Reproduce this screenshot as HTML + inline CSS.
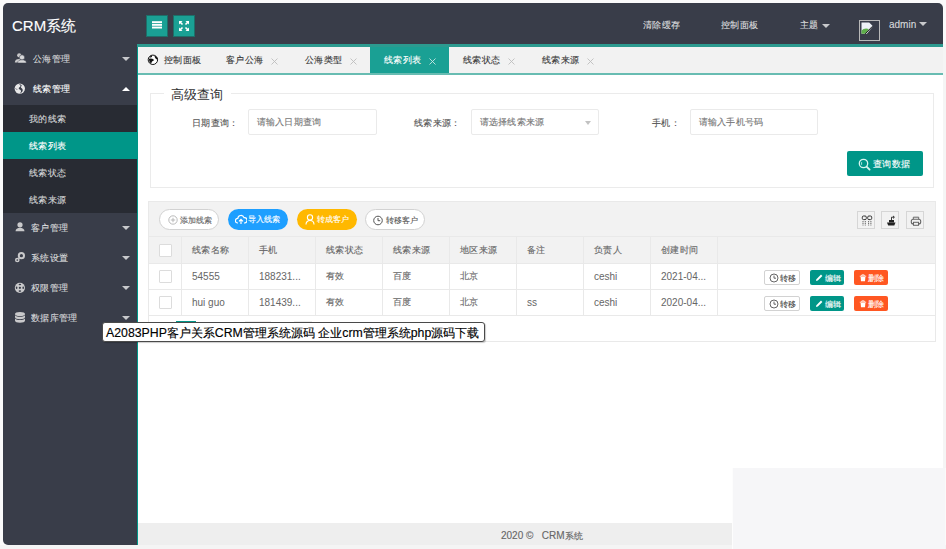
<!DOCTYPE html>
<html><head><meta charset="utf-8">
<style>
*{box-sizing:border-box;margin:0;padding:0}
html,body{width:946px;height:549px;overflow:hidden;background:#fafafa;font-family:"Liberation Sans",sans-serif;position:relative}
div,span,svg{position:absolute}
.t{white-space:nowrap;line-height:1;-webkit-text-stroke:.12px currentColor}
.r{background:#e9e9e9}
#hdr{left:3px;top:3px;width:940px;height:41px;background:#393D49;border-radius:5px 5px 0 0}
#side{left:3px;top:44px;width:134px;height:501px;background:#393D49;border-radius:0 0 0 5px}
#logo{left:12px;top:18px;font-size:15px;color:#fff}
.hbtn{top:16px;width:20px;height:20px;background:#1aa094;box-shadow:0 0 0 1px #1d6f69}
.htx{top:21px;font-size:9.3px;letter-spacing:.3px;color:rgba(255,255,255,.78)}
.caret{width:0;height:0;border-left:4px solid transparent;border-right:4px solid transparent;border-top:4.5px solid rgba(255,255,255,.72)}
.mi{left:3px;width:134px;height:30px}
.mi .t{left:30px;top:10.5px;font-size:9.3px;letter-spacing:.3px;color:rgba(255,255,255,.75)}
.mi .ar{left:119px;top:13px}
.mi svg{left:10px;top:8px;opacity:.88}
.sub{left:3px;width:134px;height:27px}
.sub .t{left:26px;top:9.5px;font-size:9.3px;letter-spacing:.3px;color:rgba(255,255,255,.75)}
#content{left:137px;top:44px;width:806px;height:501px;background:#fff;border-left:1px solid #009688}
#tabtop{left:137px;top:44px;width:806px;height:3px;background:#2c9a8f}
#tabbar{left:138px;top:47px;width:805px;height:26px;background:#f2f2f2}
#tabline{left:138px;top:73px;width:805px;height:2px;background:#68bcb2}
.tab{top:0;height:26px;width:79px}
.tab .t{top:9px;left:14px;font-size:9.3px;letter-spacing:.3px;color:#3a3a3a}
.tab svg{left:58px;top:9.5px}
#footer{left:138px;top:523px;width:805px;height:22px;background:#eee}
#footer .t{left:363px;top:7.5px;font-size:10px;color:#666}
#overlay{left:732px;top:468px;width:213px;height:81px;background:#f6f6f8;border-left:1px solid #fdfdfd}
#bstrip{left:0;top:545px;width:946px;height:4px;background:#f4f4f4}
#rstrip{left:943px;top:44px;width:3px;height:424px;background:#f5f5f5}
#fs{left:150px;top:93px;width:784px;height:95px;border:1px solid #ebebeb}
#legend{left:164px;top:86px;width:67px;height:16px;background:#fff}
#legend .t{left:7px;top:1.5px;font-size:13.3px;color:#333;-webkit-text-stroke:0}
.lbl{font-size:9.3px;letter-spacing:.3px;color:#555;top:118.5px}
.inp{top:109px;height:26px;width:129px;border:1px solid #eaeaea;background:#fff;border-radius:2px}
.inp .t{left:7.5px;top:8px;font-size:9.3px;letter-spacing:.3px;color:#777}
#qbtn{left:847px;top:151px;width:76px;height:25px;background:#009688;border-radius:2px}
#qbtn .t{left:26px;top:8.5px;font-size:9.3px;letter-spacing:.3px;color:#fff}
#qbtn svg{left:11px;top:7px}
.pill{top:209px;height:21px;width:60px;border-radius:10.5px}
.pill .t{top:6px;left:20px;font-size:8.3px}
.pill svg{left:7px;top:5px}
.ticon{top:211px;width:18px;height:18px;border:1px solid #d6d6d6;background:#f2f2f2}
.ticon svg{left:3px;top:3px}
.cell{font-size:9.3px;letter-spacing:.3px;color:#666}
.lat{font-size:10px;letter-spacing:0;-webkit-text-stroke:0}
.cb{left:159px;width:13px;height:13px;border:1px solid #dcdcdc;background:#fff;border-radius:1px}
.abtn{height:15px;border-radius:2px}
.abtn .t{top:3.5px;font-size:8.4px}
.abtn svg{top:3px}
#tip{left:102px;top:322px;width:383px;height:20px;background:#fff;border:1px solid #4a4a4a;border-radius:3px;box-shadow:1px 1px 1px rgba(0,0,0,.2)}
#tip .t{left:3px;top:3.5px;font-size:12.3px;color:#000;-webkit-text-stroke:.15px #000}
</style></head><body>
<div id="bstrip"></div>
<div id="hdr"></div>
<div id="side"></div>
<div id="content"></div>
<div id="tabtop"></div>
<div id="rstrip"></div>

<!-- header -->
<span id="logo" class="t">CRM系统</span>
<div class="hbtn" style="left:147px"><svg width="20" height="20" style="left:0;top:0"><rect x="5" y="5.2" width="10" height="1.9" fill="#fff"/><rect x="5" y="7.9" width="10" height="1.9" fill="#fff"/><rect x="5" y="10.6" width="10" height="1.9" fill="#fff"/></svg></div>
<div class="hbtn" style="left:174px"><svg width="20" height="20" style="left:0;top:0" fill="#fff" stroke="#fff"><path d="M5 5h3.5l-3.5 3.5zM15 5v3.5l-3.5-3.5zM5 15v-3.5l3.5 3.5zM15 15h-3.5l3.5-3.5z" stroke="none"/><path d="M6 6l2.5 2.5M14 6l-2.5 2.5M6 14l2.5-2.5M14 14l-2.5-2.5" stroke-width="1.6"/></svg></div>
<span class="t htx" style="left:643px">清除缓存</span>
<span class="t htx" style="left:721px">控制面板</span>
<span class="t htx" style="left:800px">主题</span>
<div class="caret" style="left:822px;top:24px"></div>
<div style="left:859px;top:20px;width:21px;height:21px;border:1px solid #b9b9b9;background:#393D49"><svg width="12" height="13" style="left:1px;top:1px"><path d="M.5 .5H8.2L11.3 3.6V5L5.8 11.7H.5Z" fill="#eef2f7"/><path d="M.5 11.7V8.6Q3 5.6 7.8 6.9L4.6 11.7Z" fill="#5fae4b"/><path d="M4.2 11.9L11.3 4.4" stroke="#1e1e1e" stroke-width="1"/></svg></div>
<span class="t htx" style="left:889px;top:20px;font-size:10px;letter-spacing:0">admin</span>
<div class="caret" style="left:919px;top:21.5px"></div>

<!-- sidebar -->
<div class="mi" style="top:44px"><svg width="16" height="14" style="top:8px"><circle cx="6.2" cy="3.3" r="2.1" fill="#ddd"/><path d="M1.8 10.6c0-2.6 1.8-3.6 4.4-3.6c1.4 0 2.4.4 3 1.2l-1.5 2.4z" fill="#ddd"/><circle cx="9" cy="5.4" r="2.6" fill="#eee" stroke="#393D49" stroke-width=".6"/><path d="M4.6 11c0-2.3 2-3.2 4.4-3.2s4.4.9 4.4 3.2z" fill="#eee" stroke="#393D49" stroke-width=".5"/></svg><span class="t">公海管理</span><div class="caret ar"></div></div>
<div class="mi" style="top:74px"><svg width="14" height="14" style="top:8px"><circle cx="6.8" cy="6.6" r="5.2" fill="#fff"/><path d="M5.8 2.2c1.2 1 2.2 1 1.6 2.3c-.6 1-2 .8-1.6 2.2c.3 1 1.8.6 2.2 2c.3 1-.6 2-1.3 2.8c1.6-.6 3.5-2 3-3.8c-.3-1.4-1.8-1.4-1.8-2.4c0-1 1.2-1.2.6-2.4c-.4-.6-1.5-.9-2.7-.7z" fill="#393D49"/><path d="M2.4 6.5c1 .2 1.6.8 1.6 1.4" stroke="#393D49" stroke-width=".6" fill="none"/></svg><span class="t" style="color:#fff">线索管理</span><div class="caret ar" style="border-top:0;border-bottom:4.5px solid #fff"></div></div>
<div style="left:3px;top:105px;width:134px;height:108px;background:#282b33"></div>
<div class="sub" style="top:105px"><span class="t">我的线索</span></div>
<div class="sub" style="top:132px;background:#009688"><span class="t" style="color:#fff">线索列表</span></div>
<div class="sub" style="top:159px"><span class="t">线索状态</span></div>
<div class="sub" style="top:186px"><span class="t">线索来源</span></div>
<div class="mi" style="top:213px"><svg width="14" height="14" style="top:8px"><circle cx="7" cy="3.8" r="2.6" fill="#ddd"/><path d="M2.5 10.3c0-2.4 2-3.6 4.5-3.6s4.5 1.2 4.5 3.6z" fill="#ddd"/></svg><span class="t" style="left:28px">客户管理</span><div class="caret ar"></div></div>
<div class="mi" style="top:243px"><svg width="14" height="14" style="top:8px"><circle cx="8.4" cy="4.7" r="2.6" fill="none" stroke="#ddd" stroke-width="2"/><circle cx="4.3" cy="9" r="1.6" fill="none" stroke="#ddd" stroke-width="1.5"/></svg><span class="t" style="left:28px">系统设置</span><div class="caret ar"></div></div>
<div class="mi" style="top:273px"><svg width="14" height="14" style="top:8px"><circle cx="6.9" cy="6.8" r="5.1" fill="#ddd"/><circle cx="6.9" cy="6.8" r="1.1" fill="#393D49"/><ellipse cx="6.9" cy="3.5" rx="1.3" ry=".8" fill="#393D49"/><ellipse cx="6.9" cy="10.1" rx="1.3" ry=".8" fill="#393D49"/><ellipse cx="3.6" cy="6.8" rx=".8" ry="1.3" fill="#393D49"/><ellipse cx="10.2" cy="6.8" rx=".8" ry="1.3" fill="#393D49"/></svg><span class="t" style="left:28px">权限管理</span><div class="caret ar"></div></div>
<div class="mi" style="top:303px"><svg width="14" height="14" style="top:8px"><ellipse cx="7" cy="3" rx="5" ry="2" fill="#ddd"/><path d="M2 4.2v2.1c0 1.1 2.2 2 5 2s5-.9 5-2V4.2c-1 1-2.8 1.5-5 1.5s-4-.5-5-1.5z" fill="#ddd"/><path d="M2 7.6v2.1c0 1.1 2.2 2 5 2s5-.9 5-2V7.6c-1 1-2.8 1.5-5 1.5s-4-.5-5-1.5z" fill="#ddd"/></svg><span class="t" style="left:28px">数据库管理</span><div class="caret ar"></div></div>

<!-- tabs -->
<div id="tabbar">
  <div class="tab" style="left:0;width:74px"><svg width="12" height="12" style="left:9px;top:7px"><circle cx="5.9" cy="5.8" r="4.7" fill="#fff" stroke="#111" stroke-width="1"/><path d="M2.4 3.4Q3.4 1.5 5.2 1.4L4.8 2.9Q3.7 3.6 2.4 3.4z" fill="#111"/><path d="M1.8 4.8Q4.8 4 7.2 6Q5.8 7.2 5 7.4L4.2 9.6Q1.8 8 1.8 4.8z" fill="#111"/><path d="M7.4 1.4Q10.6 2.6 10.8 5.8Q9.2 5.4 8.4 4.2Q7.6 3 7.4 1.4z" fill="#111"/></svg><span class="t" style="left:26px">控制面板</span></div>
  <div class="tab" style="left:74px"><span class="t">客户公海</span><svg width="9" height="9"><path d="M1.5 1.5l6 6M7.5 1.5l-6 6" stroke="#bdbdbd" stroke-width=".9"/></svg></div>
  <div class="tab" style="left:153px"><span class="t">公海类型</span><svg width="9" height="9"><path d="M1.5 1.5l6 6M7.5 1.5l-6 6" stroke="#bdbdbd" stroke-width=".9"/></svg></div>
  <div class="tab" style="left:232px;background:#1aa094"><span class="t" style="color:#fff">线索列表</span><svg width="9" height="9"><path d="M1.5 1.5l6 6M7.5 1.5l-6 6" stroke="#c8e8e4" stroke-width=".9"/></svg></div>
  <div class="tab" style="left:311px"><span class="t">线索状态</span><svg width="9" height="9"><path d="M1.5 1.5l6 6M7.5 1.5l-6 6" stroke="#bdbdbd" stroke-width=".9"/></svg></div>
  <div class="tab" style="left:390px"><span class="t">线索来源</span><svg width="9" height="9"><path d="M1.5 1.5l6 6M7.5 1.5l-6 6" stroke="#bdbdbd" stroke-width=".9"/></svg></div>
</div>
<div id="tabline"></div>

<!-- search -->
<div id="fs"></div>
<div id="legend"><span class="t">高级查询</span></div>
<span class="t lbl" style="left:192px">日期查询：</span>
<div class="inp" style="left:248px"><span class="t">请输入日期查询</span></div>
<span class="t lbl" style="left:414px">线索来源：</span>
<div class="inp" style="left:471px;width:128px"><span class="t">请选择线索来源</span><div style="left:113px;top:10.5px;width:0;height:0;border-left:3.5px solid transparent;border-right:3.5px solid transparent;border-top:4px solid #c2c2c2"></div></div>
<span class="t lbl" style="left:652px">手机：</span>
<div class="inp" style="left:690px;width:128px"><span class="t">请输入手机号码</span></div>
<div id="qbtn"><svg width="13" height="13"><circle cx="5.5" cy="5.5" r="4.2" fill="none" stroke="#d8f5f0" stroke-width="1.3"/><path d="M8.6 8.6l3 3" stroke="#d8f5f0" stroke-width="1.8" stroke-linecap="round"/><path d="M3.6 4.2v2.6" stroke="#d8f5f0" stroke-width=".8"/></svg><span class="t">查询数据</span></div>

<!-- table -->
<div style="left:148px;top:201px;width:788px;height:141px;background:#fff"></div>
<div style="left:148px;top:201px;width:788px;height:63px;background:#f2f2f2"></div>
<div class="r" style="left:148px;top:201px;width:788px;height:1px"></div>
<div class="r" style="left:148px;top:341px;width:788px;height:1px"></div>
<div class="r" style="left:148px;top:201px;width:1px;height:141px"></div>
<div class="r" style="left:935px;top:201px;width:1px;height:141px"></div>
<div class="r" style="left:148px;top:236px;width:788px;height:1px"></div>
<div class="r" style="left:148px;top:263px;width:788px;height:1px"></div>
<div class="r" style="left:148px;top:289px;width:788px;height:1px"></div>
<div class="r" style="left:148px;top:315px;width:788px;height:1px"></div>
<div class="r" style="left:181px;top:237px;width:1px;height:78px"></div>
<div class="r" style="left:248px;top:237px;width:1px;height:78px"></div>
<div class="r" style="left:315px;top:237px;width:1px;height:78px"></div>
<div class="r" style="left:382px;top:237px;width:1px;height:78px"></div>
<div class="r" style="left:449px;top:237px;width:1px;height:78px"></div>
<div class="r" style="left:516px;top:237px;width:1px;height:78px"></div>
<div class="r" style="left:583px;top:237px;width:1px;height:78px"></div>
<div class="r" style="left:650px;top:237px;width:1px;height:78px"></div>
<div class="r" style="left:717px;top:237px;width:1px;height:78px"></div>
<div style="left:176px;top:320.5px;width:20px;height:3px;background:#009688"></div><div style="left:245px;top:321px;width:26px;height:1px;background:#eee"></div><div style="left:294px;top:321px;width:18px;height:1px;background:#eee"></div>

<div class="pill" style="left:159px;border:1px solid #d2d2d2;background:#fff"><svg width="11" height="11" style="left:7.5px;top:4.5px"><circle cx="5" cy="5" r="4.2" fill="none" stroke="#aaa" stroke-width=".8"/><path d="M5 2.8v4.4M2.8 5h4.4" stroke="#aaa" stroke-width=".8"/></svg><span class="t" style="color:#666">添加线索</span></div>
<div class="pill" style="left:228px;background:#1e9fff"><svg width="12" height="11"><path d="M3 9H2.6A2.3 2.3 0 0 1 2.8 4.4A3.2 3.2 0 0 1 9 3.6A2.6 2.6 0 0 1 9.6 9H9" fill="none" stroke="#fff" stroke-width="1.2"/><path d="M6 10V5.5M4 7.3l2-2l2 2" fill="none" stroke="#fff" stroke-width="1.2"/></svg><span class="t" style="color:#fff">导入线索</span></div>
<div class="pill" style="left:297px;background:#ffb800"><svg width="11" height="11" style="left:8px"><circle cx="5" cy="3.4" r="2.6" fill="none" stroke="#fff" stroke-width="1.1"/><path d="M1 10.5c0-2.6 1.8-4 4-4s4 1.4 4 4" fill="none" stroke="#fff" stroke-width="1.1"/></svg><span class="t" style="color:#fff">转成客户</span></div>
<div class="pill" style="left:365px;border:1px solid #d2d2d2;background:#fff"><svg width="11" height="11" style="left:6.5px;top:4.5px"><circle cx="5" cy="5.5" r="4.3" fill="none" stroke="#555" stroke-width="1"/><path d="M5 3v2.7h2.2" fill="none" stroke="#555" stroke-width="1"/></svg><span class="t" style="color:#555">转移客户</span></div>
<div class="ticon" style="left:857px"><svg width="12" height="12"><rect x="1.3" y="1" width="4" height="3.6" rx="1.2" fill="none" stroke="#333" stroke-width="1"/><rect x="6.7" y="1" width="4" height="3.6" rx="1.2" fill="none" stroke="#333" stroke-width="1"/><path d="M2 6v4.5M4.3 6v4.5M7.6 6v4.5M9.9 6v4.5" stroke="#444" stroke-width=".8" stroke-dasharray="1.2 .6"/></svg></div>
<div class="ticon" style="left:881px"><svg width="12" height="12"><path d="M2 7.5h8.5l-1.2 3H3.2z" fill="#222"/><path d="M4 7.5v-2.5h5v2.5" fill="#222"/><path d="M6.5 5V2.2h2.6M8 .9l1.4 1.3L8 3.5" fill="none" stroke="#222" stroke-width=".9"/></svg></div>
<div class="ticon" style="left:906px"><svg width="12" height="12"><path d="M3.3 4.3V2.2h5.4v2.1" fill="none" stroke="#666" stroke-width="1"/><rect x="1.3" y="4.3" width="9.4" height="4.6" rx="2" fill="none" stroke="#666" stroke-width="1.1"/><rect x="3.5" y="7.3" width="5" height="3" fill="#f2f2f2" stroke="#666" stroke-width="1"/></svg></div>

<div class="cb" style="top:244px"></div>
<span class="t cell" style="left:192px;top:246px">线索名称</span>
<span class="t cell" style="left:259px;top:246px">手机</span>
<span class="t cell" style="left:326px;top:246px">线索状态</span>
<span class="t cell" style="left:393px;top:246px">线索来源</span>
<span class="t cell" style="left:460px;top:246px">地区来源</span>
<span class="t cell" style="left:527px;top:246px">备注</span>
<span class="t cell" style="left:594px;top:246px">负责人</span>
<span class="t cell" style="left:661px;top:246px">创建时间</span>

<div class="cb" style="top:270px"></div>
<span class="t cell lat" style="left:192px;top:272px">54555</span>
<span class="t cell lat" style="left:259px;top:272px">188231...</span>
<span class="t cell" style="left:326px;top:272px">有效</span>
<span class="t cell" style="left:393px;top:272px">百度</span>
<span class="t cell" style="left:460px;top:272px">北京</span>
<span class="t cell lat" style="left:594px;top:272px">ceshi</span>
<span class="t cell lat" style="left:661px;top:272px">2021-04...</span>

<div class="cb" style="top:296px"></div>
<span class="t cell lat" style="left:192px;top:298px">hui guo</span>
<span class="t cell lat" style="left:259px;top:298px">181439...</span>
<span class="t cell" style="left:326px;top:298px">有效</span>
<span class="t cell" style="left:393px;top:298px">百度</span>
<span class="t cell" style="left:460px;top:298px">北京</span>
<span class="t cell lat" style="left:527px;top:298px">ss</span>
<span class="t cell lat" style="left:594px;top:298px">ceshi</span>
<span class="t cell lat" style="left:661px;top:298px">2020-04...</span>

<div class="abtn" style="left:764px;top:270px;width:36px;border:1px solid #d2d2d2;background:#fff"><svg width="10" height="10" style="left:4px;top:2px"><circle cx="5" cy="5" r="4" fill="none" stroke="#555" stroke-width=".9"/><path d="M5 2.6v2.6h2" fill="none" stroke="#555" stroke-width=".9"/></svg><span class="t" style="left:15px;top:2.5px;color:#444">转移</span></div>
<div class="abtn" style="left:810px;top:270px;width:34px;background:#009688"><svg width="8" height="8" style="left:4.5px;top:3.5px"><path d="M1 7l.4-1.8L6 .6l1.4 1.4L2.8 6.6z" fill="#fff"/></svg><span class="t" style="left:15px;color:#fff">编辑</span></div>
<div class="abtn" style="left:854px;top:270px;width:34px;background:#ff5722"><svg width="8" height="8" style="left:4.5px;top:3.5px"><path d="M.8 2.2h6.4M2.8 2V.9h2.4V2" fill="none" stroke="#fff" stroke-width=".9"/><path d="M1.6 3h4.8l-.4 4.2H2z" fill="#fff"/></svg><span class="t" style="left:14px;color:#fff">删除</span></div>

<div class="abtn" style="left:764px;top:296px;width:36px;border:1px solid #d2d2d2;background:#fff"><svg width="10" height="10" style="left:4px;top:2px"><circle cx="5" cy="5" r="4" fill="none" stroke="#555" stroke-width=".9"/><path d="M5 2.6v2.6h2" fill="none" stroke="#555" stroke-width=".9"/></svg><span class="t" style="left:15px;top:2.5px;color:#444">转移</span></div>
<div class="abtn" style="left:810px;top:296px;width:34px;background:#009688"><svg width="8" height="8" style="left:4.5px;top:3.5px"><path d="M1 7l.4-1.8L6 .6l1.4 1.4L2.8 6.6z" fill="#fff"/></svg><span class="t" style="left:15px;color:#fff">编辑</span></div>
<div class="abtn" style="left:854px;top:296px;width:34px;background:#ff5722"><svg width="8" height="8" style="left:4.5px;top:3.5px"><path d="M.8 2.2h6.4M2.8 2V.9h2.4V2" fill="none" stroke="#fff" stroke-width=".9"/><path d="M1.6 3h4.8l-.4 4.2H2z" fill="#fff"/></svg><span class="t" style="left:14px;color:#fff">删除</span></div>

<div id="tip"><span class="t">A2083PHP客户关系CRM管理系统源码 企业crm管理系统php源码下载</span></div>

<div id="footer"><span class="t">2020 ©&nbsp;&nbsp; CRM<span style="position:static;font-size:9.3px;letter-spacing:.2px">系统</span></span></div>
<div id="overlay"></div>
</body></html>
